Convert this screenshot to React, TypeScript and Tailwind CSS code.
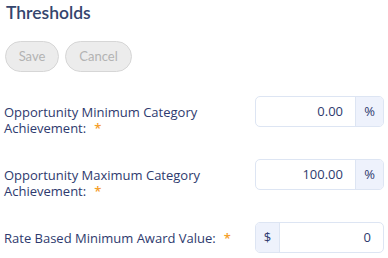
import React from "react";

type Row = {
  label: string;
  value: string;
  prefix?: string;
  suffix?: string;
};

const rows: Row[] = [
  { label: "Opportunity Minimum Category Achievement:", value: "0.00", suffix: "%" },
  { label: "Opportunity Maximum Category Achievement:", value: "100.00", suffix: "%" },
  { label: "Rate Based Minimum Award Value:", value: "0", prefix: "$" },
];

function Addon({ text, side }: { text: string; side: "left" | "right" }) {
  return (
    <div
      className={
        side === "left"
          ? "flex w-[24px] items-center justify-center border-r border-[#dde5f3] bg-[#eef2fc] text-[13px] text-[#2e3a6e]"
          : "flex w-[28px] items-center justify-center border-l border-[#dde5f3] bg-[#eef2fc] text-[13px] text-[#2e3a6e]"
      }
    >
      {text}
    </div>
  );
}

export default function App() {
  return (
    <div className="h-[258px] w-[388px] overflow-hidden bg-white font-['Open_Sans',sans-serif]">
      <h2 className="pl-[6px] pt-[2px] font-['Lato',sans-serif] text-[17.5px] font-semibold leading-[22px] text-[#34456d]">
        Thresholds
      </h2>

      <div className="mt-[17px] flex gap-[6px] pl-[5px] font-['Lato',sans-serif]">
        <button className="h-[31px] w-[54px] rounded-full border border-[#d6d6d6] bg-[#ececec] text-[13px] text-[#b3b3b3]">
          Save
        </button>
        <button className="h-[31px] w-[67px] rounded-full border border-[#d6d6d6] bg-[#ececec] text-[13px] text-[#b3b3b3]">
          Cancel
        </button>
      </div>

      <div className="mt-[24px] flex flex-col gap-[23px] pl-[4px] pr-[4px]">
        {rows.map((row) => (
          <div key={row.label} className="flex items-start">
            <label className="w-[251px] pr-[16px] pt-[8px] text-[13px] leading-[16px] text-[#2e3a6e]">
              {row.label}
              <span className="ml-[8px] font-semibold text-[#f5a02c]">*</span>
            </label>
            <div className="flex h-[31px] flex-1 overflow-hidden rounded-[5px] border border-[#dde5f3] bg-white">
              {row.prefix && <Addon text={row.prefix} side="left" />}
              <div className="flex flex-1 items-center justify-end pr-[12px] text-[13px] text-[#2e3a6e]">
                {row.value}
              </div>
              {row.suffix && <Addon text={row.suffix} side="right" />}
            </div>
          </div>
        ))}
      </div>
    </div>
  );
}
